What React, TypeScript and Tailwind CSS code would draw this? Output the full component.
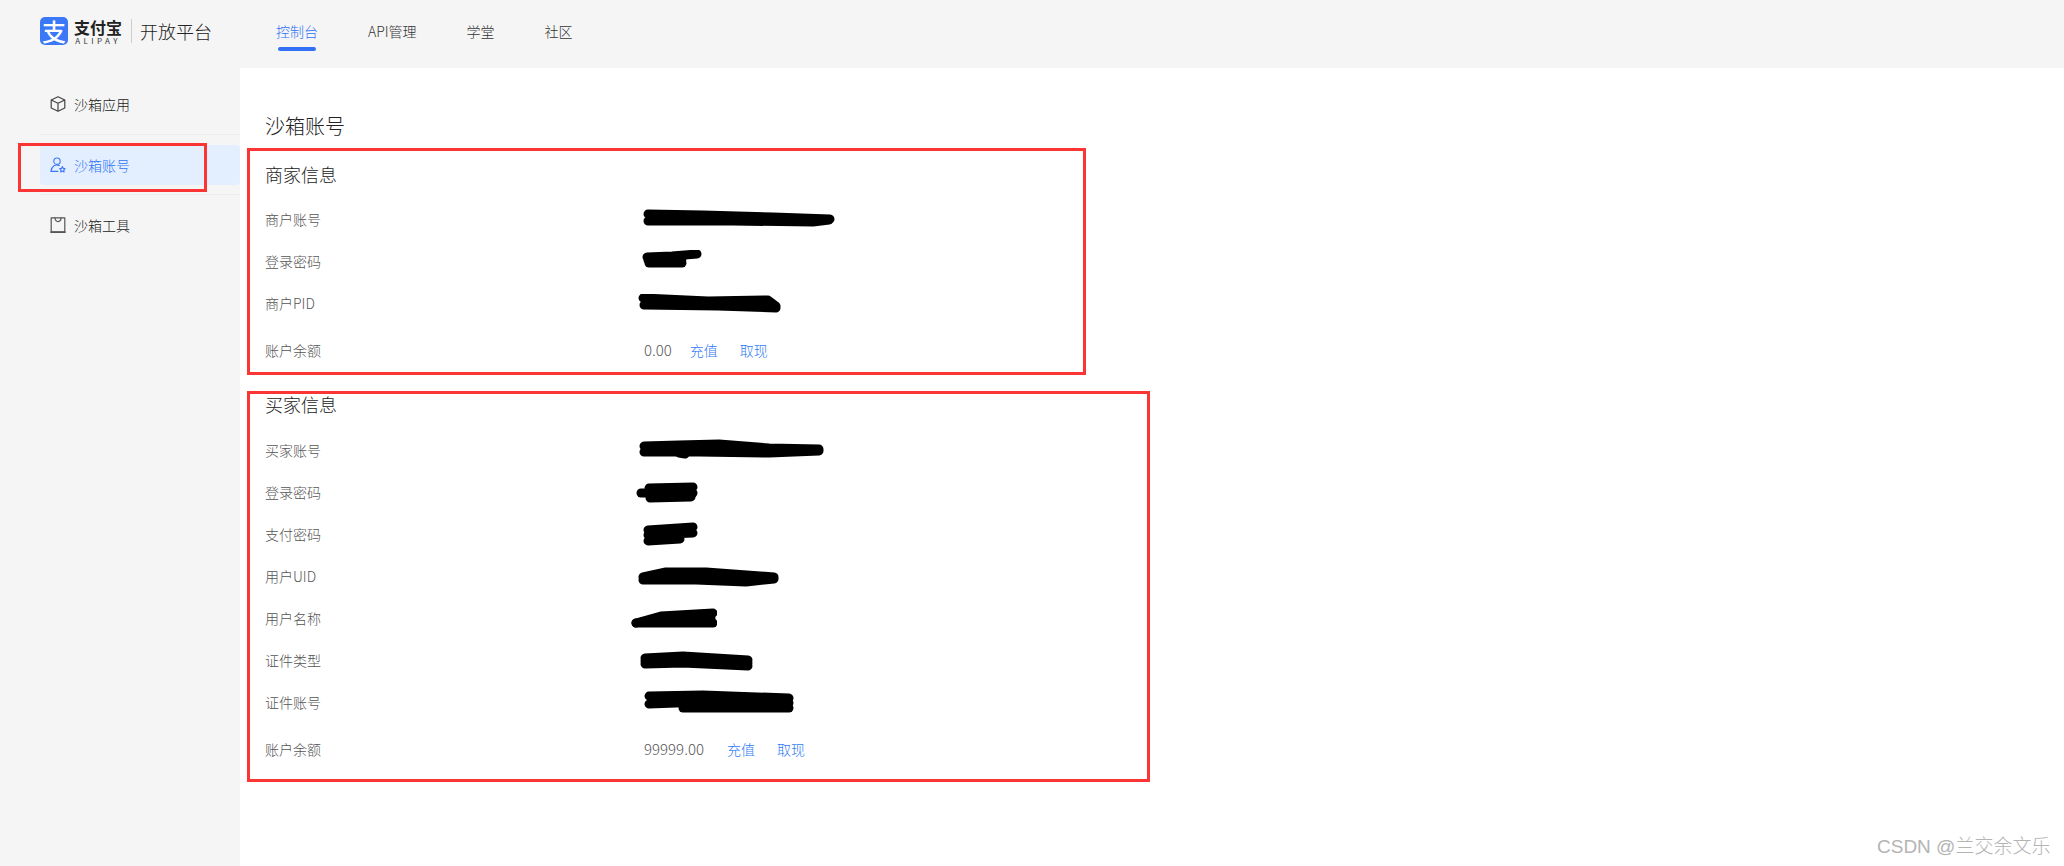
const links = ["API管理", "学堂", "社区"];

const merchantRows = [
  {
    label: "商户账号",
    mark: "left-[378px] top-[11px] w-[192px] h-[18px]",
    box: "0 0 192 18",
    d: ["M5 5 L60 6 L130 8 L187 10", "M5 12 L90 12 L170 13 L186 11"],
  },
  {
    label: "登录密码",
    mark: "left-[377px] top-[10px] w-[60px] h-[18px]",
    box: "0 0 60 18",
    d: ["M5 7 L30 6 L55 4", "M6 10 L40 9", "M7 13 L40 13"],
  },
  {
    label: "商户PID",
    mark: "left-[373px] top-[12px] w-[143px] h-[19px]",
    box: "0 0 143 19",
    d: ["M5 4 L70 7 L130 6 L138 12", "M6 11 L80 12 L138 14"],
  },
];

const buyerRows = [
  {
    label: "买家账号",
    mark: "left-[374px] top-[10px] w-[185px] h-[20px]",
    box: "0 0 185 20",
    d: ["M5 7 L40 6 L80 5 L130 9 L180 10", "M5 13 L60 13 L130 14 L180 12", "M40 14 L46 15"],
  },
  {
    label: "登录密码",
    mark: "left-[370px] top-[11px] w-[63px] h-[22px]",
    box: "0 0 63 22",
    d: ["M14 6 L58 5", "M6 11 L58 11", "M15 16 L56 15"],
  },
  {
    label: "支付密码",
    mark: "left-[377px] top-[9px] w-[56px] h-[24px]",
    box: "0 0 56 24",
    d: ["M6 8 L51 5", "M6 13 L51 11", "M6 19 L38 17"],
  },
  {
    label: "用户UID",
    mark: "left-[371px] top-[11px] w-[144px] h-[21px]",
    box: "0 0 144 21",
    d: ["M7 11 L30 6 L70 6 L138 11", "M7 14 L60 14 L110 16 L138 13", "M20 9 L120 12"],
  },
  {
    label: "用户名称",
    mark: "left-[366px] top-[11px] w-[86px] h-[20px]",
    box: "0 0 86 20",
    d: ["M5 15 L30 8 L82 5", "M5 15 L82 15", "M30 11 L80 10"],
  },
  {
    label: "证件类型",
    mark: "left-[373px] top-[11px] w-[115px] h-[22px]",
    box: "0 0 115 22",
    d: ["M7 8 L45 6 L110 10", "M7 14 L45 13 L110 16", "M7 11 L110 13"],
  },
  {
    label: "证件账号",
    mark: "left-[378px] top-[9px] w-[151px] h-[23px]",
    box: "0 0 151 23",
    d: ["M6 6 L60 5 L146 8", "M6 14 L60 12 L146 13", "M40 18 L146 18"],
  },
];

function Scribble({ mark, box, d }: { mark: string; box: string; d: string[] }) {
  return (
    <svg className={`absolute ${mark}`} viewBox={box} fill="none">
      {d.map((p) => (
        <path key={p} d={p} stroke="#000" strokeWidth="9" strokeLinecap="round" strokeLinejoin="round" />
      ))}
    </svg>
  );
}

function Row({ row }: { row: { label: string; mark: string; box: string; d: string[] } }) {
  return (
    <div className="relative flex h-[42px] items-center text-[14px] text-[#555]">
      {row.label}
      <Scribble mark={row.mark} box={row.box} d={row.d} />
    </div>
  );
}

function Balance({ amount, gap }: { amount: string; gap: string }) {
  return (
    <div className="flex h-[42px] items-center text-[14px] text-[#555]">
      <div className="w-[379px]">账户余额</div>
      <div className={`${gap} text-[15px]`}>{amount}</div>
      <div className="text-[#2f7bf5]">充值</div>
      <div className="ml-[22px] text-[#2f7bf5]">取现</div>
    </div>
  );
}

function BoxIcon() {
  return (
    <svg className="h-4 w-4" viewBox="0 0 16 16" fill="none" stroke="#444" strokeWidth="1.2" strokeLinejoin="round">
      <path d="M8 .8 14.8 4v8L8 15.2 1.2 12V4z" />
      <path d="M1.2 4 8 7.2 14.8 4M8 7.2v8" />
    </svg>
  );
}

function UserIcon() {
  return (
    <svg className="h-4 w-4" viewBox="0 0 16 16" fill="none" stroke="#3b76f6" strokeWidth="1.1" strokeLinejoin="round" strokeLinecap="round">
      <circle cx="7" cy="4.2" r="3.2" />
      <path d="M9.2 8.6C5.6 6.8 1.6 9 .9 14.4h7" />
      <path d="m12.4 9.6.9 1.8 1.9.3-1.4 1.3.3 1.9-1.7-.9-1.7.9.3-1.9-1.4-1.3 1.9-.3z" />
    </svg>
  );
}

function BagIcon() {
  return (
    <svg className="h-4 w-4" viewBox="0 0 16 16" fill="none" stroke="#555" strokeWidth="1.2" strokeLinejoin="round" strokeLinecap="round">
      <path d="M1.2.8h13.6v14.4H1.2z" />
      <path d="M5 .8c0 5 6 5 6 0" />
      <path d="M1.2 15.2h13.6" strokeWidth="1.8" />
    </svg>
  );
}

export default function App() {
  return (
    <div className="relative flex h-[866px] w-[2064px] flex-col overflow-hidden bg-[#f5f5f5] font-['Noto_Sans_CJK_SC','Noto_Sans',sans-serif] font-light">
      <header className="flex h-[68px] shrink-0 items-center pb-[6px] pl-[40px]">
        <div className="flex h-[28px] w-[28px] items-center justify-center rounded-[5px] bg-[#3b78f7] text-[24px] leading-none font-medium text-white">
          支
        </div>
        <div className="ml-[5px] flex w-[50px] flex-col items-center">
          <div className="text-[16px] leading-[18px] font-bold text-[#222]">支付宝</div>
          <div className="text-[8px] leading-[9px] font-normal tracking-[3.4px] text-[#333]">ALIPAY</div>
        </div>
        <div className="ml-[8px] h-[24px] w-px bg-[#ccc]"></div>
        <div className="ml-[8px] text-[18px] text-[#222]">开放平台</div>
        <nav className="ml-[64px] flex gap-[50px] text-[14px] text-[#333]">
          <div className="relative text-[#2f73f6]">
            控制台
            <div className="absolute top-[26px] left-[2px] h-[4px] w-[38px] rounded-full bg-[#3370f5]"></div>
          </div>
          {links.map((l) => (
            <div key={l}>{l}</div>
          ))}
        </nav>
      </header>

      <div className="flex min-h-0 flex-1">
        <aside className="w-[240px] shrink-0 pt-[16px] pl-[40px] text-[14px] text-[#222]">
          <div className="flex h-[40px] items-center gap-[8px] pl-[10px]">
            <BoxIcon />
            沙箱应用
          </div>
          <div className="mt-[10px] mb-[10px] h-px bg-[#ececec]"></div>
          <div className="flex h-[40px] items-center gap-[8px] rounded-[4px] bg-[#e3efff] pl-[10px] text-[#2f73f6]">
            <UserIcon />
            沙箱账号
          </div>
          <div className="mt-[9px] mb-[10px] h-px bg-[#ececec]"></div>
          <div className="flex h-[40px] items-center gap-[8px] pl-[10px]">
            <BagIcon />
            沙箱工具
          </div>
        </aside>

        <main className="flex-1 bg-white pl-[25px]">
          <h1 className="mt-[41px] text-[20px] leading-[34px] text-[#222]">沙箱账号</h1>
          <h2 className="mt-[16px] text-[18px] leading-[30px] text-[#222]">商家信息</h2>
          <div className="mt-[9px]">
            {merchantRows.map((r) => (
              <Row key={r.label} row={r} />
            ))}
          </div>
          <div className="mt-[5px]">
            <Balance amount="0.00" gap="mr-[18px]" />
          </div>
          <h2 className="mt-[18px] text-[18px] leading-[30px] text-[#222]">买家信息</h2>
          <div className="mt-[10px]">
            {buyerRows.map((r) => (
              <Row key={r.label} row={r} />
            ))}
          </div>
          <div className="mt-[5px]">
            <Balance amount="99999.00" gap="mr-[23px]" />
          </div>
        </main>
      </div>

      {/* red annotation boxes */}
      <div className="absolute top-[143px] left-[18px] h-[49px] w-[189px] border-[3px] border-[#fb3434]"></div>
      <div className="absolute top-[148px] left-[247px] h-[227px] w-[839px] border-[3px] border-[#fb3434]"></div>
      <div className="absolute top-[391px] left-[247px] h-[391px] w-[903px] border-[3px] border-[#fb3434]"></div>

      <div className="absolute top-[833px] left-[1877px] font-['Liberation_Sans','Noto_Sans_CJK_SC',sans-serif] text-[19px] leading-[28px] text-[#b4b4b4]">
        CSDN @兰交余文乐
      </div>
    </div>
  );
}
